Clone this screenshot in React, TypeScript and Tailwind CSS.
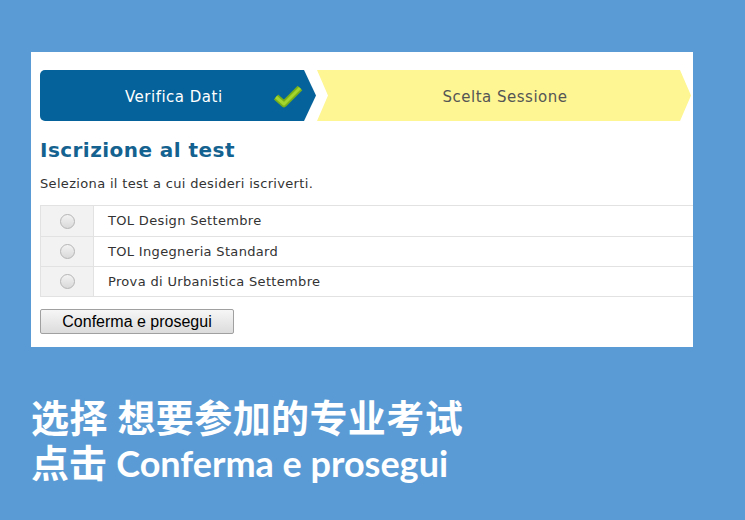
import React from "react";

const verdana = { fontFamily: '"DejaVu Sans", Verdana, sans-serif' };

function Radio() {
  return (
    <div className="w-[15px] h-[15px] rounded-full border border-[#b5b5b5] bg-gradient-to-b from-[#f3f3f3] to-[#d9d9d9]" />
  );
}

export default function App() {
  const rows = ["TOL Design Settembre", "TOL Ingegneria Standard", "Prova di Urbanistica Settembre"];
  return (
    <div className="w-[745px] h-[520px] bg-[#5b9bd5] overflow-hidden relative">
      <div className="pt-[52px] pl-[31px]">
        <div className="w-[662px] h-[295px] bg-white overflow-hidden pl-[9px] pt-[18px]" style={verdana}>
          {/* breadcrumb */}
          <div className="flex h-[51px]">
            <div className="w-[276px] h-full bg-[#05629a] rounded-l-[5px] [clip-path:polygon(0_0,calc(100%-12px)_0,100%_50%,calc(100%-12px)_100%,0_100%)] flex items-center">
              <span className="text-white text-[15px] tracking-[0.5px] ml-[85px] mt-[3px]">Verifica Dati</span>
              <svg width="30" height="24" viewBox="0 0 30 24" className="ml-[50px]">
                <path d="M3 13 L11 20 L27 4" fill="none" stroke="#78b01a" strokeWidth="6.5" strokeLinejoin="round" />
                <path d="M3 13 L11 20 L27 4" fill="none" stroke="#a3d52c" strokeWidth="3" strokeLinejoin="round" />
              </svg>
            </div>
            <div className="w-[374px] ml-[1px] h-full bg-[#fdf692] [clip-path:polygon(0_0,calc(100%-11px)_0,100%_50%,calc(100%-11px)_100%,0_100%,11px_50%)] flex items-center justify-center">
              <span className="text-[#555] text-[15px] tracking-[0.5px] pl-[2px] mt-[3px]">Scelta Sessione</span>
            </div>
          </div>
          <h1 className="text-[20px] font-bold text-[#14628f] tracking-[0.45px] mt-[15px] leading-[28px]">Iscrizione al test</h1>
          <p className="text-[13px] text-[#333] tracking-[0.33px] mt-[11px] leading-[18px]">Seleziona il test a cui desideri iscriverti.</p>
          <div className="mt-[12px] w-[660px] border-t border-b border-l border-[#e2e2e2]">
            {rows.map((r, i) => (
              <div key={r} className={`flex h-[30px] ${i > 0 ? "border-t border-[#e2e2e2]" : ""}`}>
                <div className="w-[53px] bg-[#f2f2f2] border-r border-[#e2e2e2] flex items-center justify-center">
                  <Radio />
                </div>
                <div className="flex items-center pl-[14px] text-[13px] tracking-[0.33px] text-[#333]">{r}</div>
              </div>
            ))}
          </div>
          <button
            className="mt-[12px] w-[194px] h-[25px] border border-[#a0a0a0] rounded-[2px] bg-gradient-to-b from-[#f6f6f6] to-[#dcdcdc] text-[16px] text-black leading-none"
            style={{ fontFamily: '"Liberation Sans", Arial, sans-serif' }}
          >
            Conferma e prosegui
          </button>
        </div>
      </div>
      <div
        className="pl-[31px] mt-[48px] text-white font-bold text-[38px] leading-[45px]"
        style={{ fontFamily: 'Lato, "Noto Sans CJK SC", sans-serif' }}
      >
        <div className="tracking-[0.4px]">选择 想要参加的专业考试</div>
        <div>点击 <span className="text-[36px]">Conferma e prosegui</span></div>
      </div>
    </div>
  );
}
